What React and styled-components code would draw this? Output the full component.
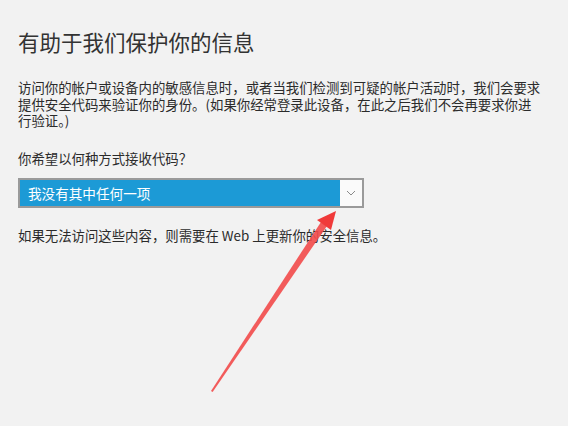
import styled, { createGlobalStyle } from 'styled-components';

const Global = createGlobalStyle`
  html, body { margin: 0; padding: 0; background: #f2f2f2; }
  body { font-family: "Noto Sans CJK SC", "Liberation Sans", sans-serif; }
`

const Page = styled.div`
  position: relative;
  width: 568px;
  height: 426px;
  overflow: hidden;
  background: #f2f2f2;
  padding: 27px 0 0 18px;
  box-sizing: border-box;
  color: #2b2b2b;
`

const Title = styled.h1`
  margin: 0;
  font-size: 21.5px;
  font-weight: 400;
  line-height: 30px;
  color: #333;
`

const Para = styled.p`
  margin: ${p => p.top || 0}px 0 0 0;
  font-size: 13.4px;
  line-height: 16.7px;
  white-space: nowrap;
  color: #2b2b2b;
`

const Select = styled.div`
  margin-top: 11px;
  width: 342px;
  height: 26px;
  border: 2px solid #9a9a9a;
  display: flex;
  background: #1c9ad6;
`

const SelectText = styled.div`
  flex: 1;
  color: #fff;
  font-size: 13.6px;
  line-height: 26px;
  padding-left: 8px;
`

const Chevron = styled.div`
  width: 22px;
  background: #fafafa;
  display: flex;
  align-items: center;
  justify-content: center;
`

const Arrow = styled.svg`
  position: absolute;
  left: 0;
  top: 0;
  pointer-events: none;
`

export default function App() {
  return (
    <>
      <Global />
      <Page>
        <Title>有助于我们保护你的信息</Title>
        <Para top={22}>
          访问你的帐户或设备内的敏感信息时，或者当我们检测到可疑的帐户活动时，我们会要求<br />
          提供安全代码来验证你的身份。(如果你经常登录此设备，在此之后我们不会再要求你进<br />
          行验证。)
        </Para>
        <Para top={21}>你希望以何种方式接收代码？</Para>
        <Select>
          <SelectText>我没有其中任何一项</SelectText>
          <Chevron>
            <svg width="10" height="6" viewBox="0 0 10 6">
              <path d="M1 1 L5 5 L9 1" fill="none" stroke="#8a8a8a" strokeWidth="1" />
            </svg>
          </Chevron>
        </Select>
        <Para top={19}>如果无法访问这些内容，则需要在 Web 上更新你的安全信息。</Para>
        <Arrow width="568" height="426" viewBox="0 0 568 426">
          <path d="M211 391 L212.6 392 L327 226 L321 222 Z" fill="#f24a4a" opacity="0.9" />
          <path d="M336 211 L317 220 L331 230 Z" fill="#f03a3a" />
        </Arrow>
      </Page>
    </>
  )
}
